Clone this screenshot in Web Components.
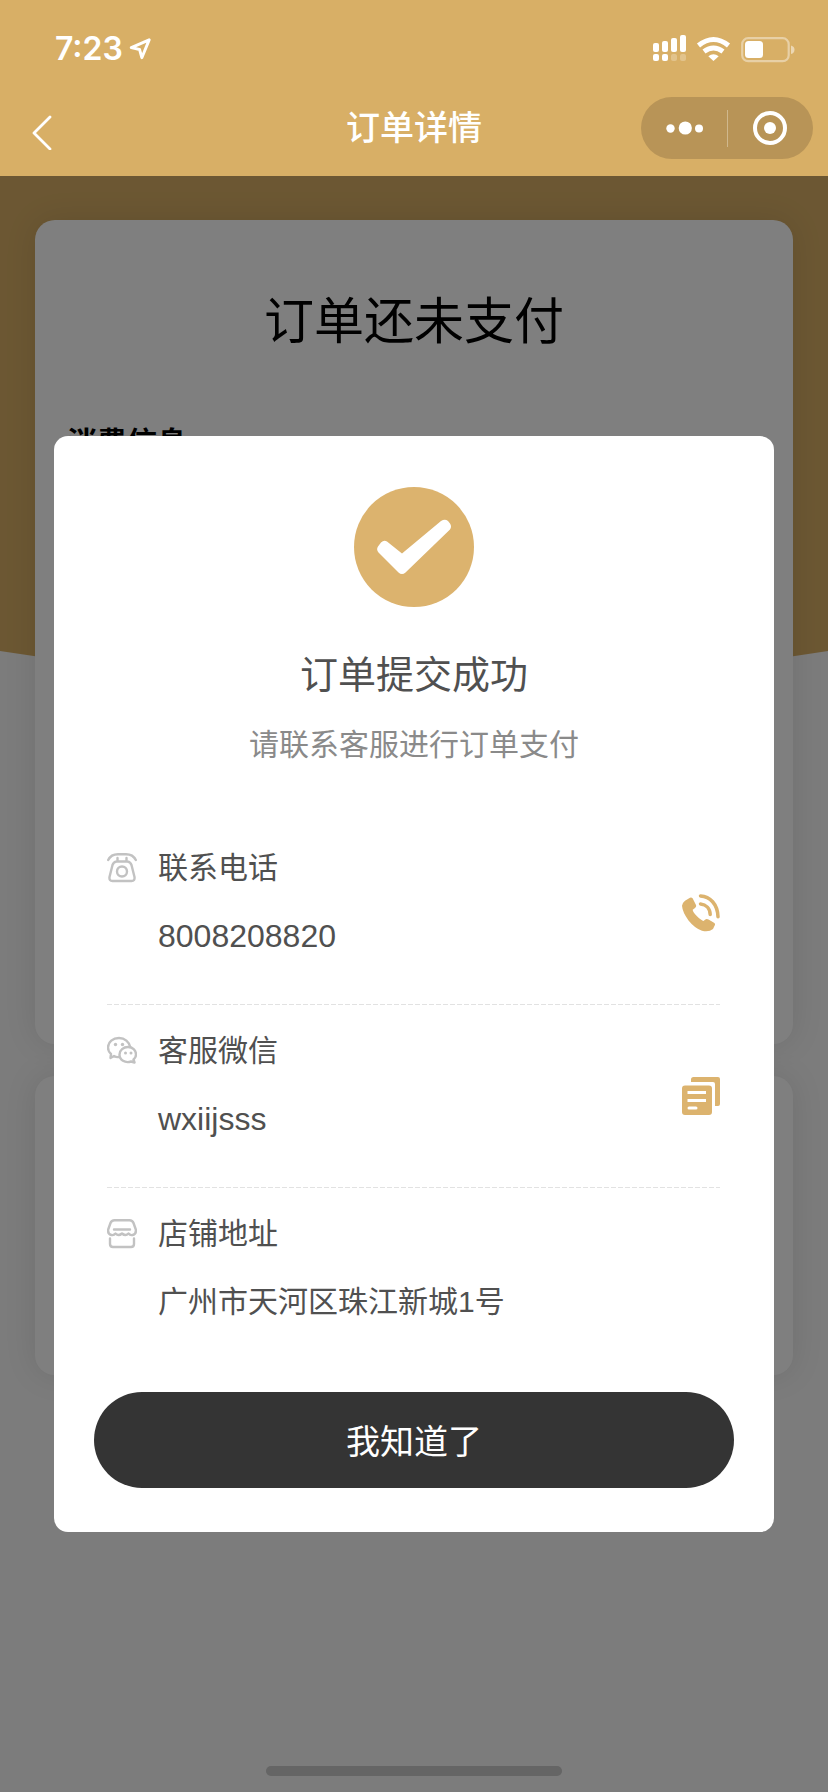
<!DOCTYPE html>
<html lang="zh-CN">
<head>
<meta charset="utf-8">
<meta name="viewport" content="width=device-width, initial-scale=1">
<title>订单详情</title>
<style>
  html, body { margin: 0; background: #f8f8f8; }
  body { font-family: "Liberation Sans", "Noto Sans CJK SC", sans-serif; color: #000; }
</style>
</head>
<body>
<order-page>
  <status-bar slot="header" time="7:23"></status-bar>
  <nav-bar slot="header">订单详情</nav-bar>
  <info-card size="large">
    <span slot="status">订单还未支付</span>
    <span slot="heading">消费信息</span>
  </info-card>
  <info-card size="small"></info-card>
  <result-dialog slot="dialog">
    <span slot="title">订单提交成功</span>
    <span slot="subtitle">请联系客服进行订单支付</span>
    <contact-row icon="telephone" action="call">联系电话<span slot="value">8008208820</span></contact-row>
    <contact-row icon="wechat" action="copy">客服微信<span slot="value">wxiijsss</span></contact-row>
    <contact-row icon="shop" cjk>店铺地址<span slot="value">广州市天河区珠江新城1号</span></contact-row>
    <span slot="confirm">我知道了</span>
  </result-dialog>
</order-page>

<script>
const define = (name, render) => customElements.define(name, class extends HTMLElement {
  constructor() {
    super();
    this.attachShadow({ mode: "open" });
  }
  connectedCallback() {
    this.shadowRoot.innerHTML = render(this);
  }
});

define("order-page", () => `
  <style>
    :host { display: flex; flex-direction: column; min-height: 100vh; position: relative; }
    header { background: #d8af66; }
    main { flex: 1; display: flex; flex-direction: column; position: relative; overflow: hidden; }
    .content { flex: 1; display: flex; flex-direction: column; gap: 32px; padding: 44px 35px 0; position: relative; }
    .curve { position: absolute; left: 0; top: 0; width: 100%; height: 496px; }
    .mask { position: absolute; inset: 0; display: flex; align-items: center; justify-content: center;
            background: rgba(0,0,0,.5); padding: 0 54px; }
    .home { position: absolute; bottom: 16px; left: 50%; width: 296px; height: 10px; margin-left: -148px;
            border-radius: 5px; background: #656565; }
  </style>
  <header><slot name="header"></slot></header>
  <main>
    <svg class="curve" viewBox="0 0 828 496" preserveAspectRatio="none" aria-hidden="true">
      <path d="M0 0H828V475Q414 540 0 475Z" fill="#d8af66"/>
    </svg>
    <div class="content"><slot></slot></div>
    <div class="mask"><slot name="dialog"></slot></div>
    <div class="home"></div>
  </main>`);

define("status-bar", el => `
  <style>
    :host { display: flex; justify-content: space-between; align-items: center; height: 96px; padding: 2px 33px 0 55px;
            box-sizing: border-box; color: #fff; font: 600 32px/40px Inter, "Liberation Sans", sans-serif; }
    .time { display: flex; align-items: center; gap: 6px; }
  </style>
  <div class="time"><span>${el.getAttribute("time")}</span>
    <svg width="22" height="22" viewBox="0 0 24 24" fill="none" stroke="#fff" stroke-width="3.200" stroke-linejoin="round" aria-hidden="true">
      <path d="M22 2L2.500 10.500L11.500 12.500L14 21.500Z"/></svg>
  </div>
  <svg width="142" height="28" viewBox="0 0 142 28" fill="#fff" aria-hidden="true">
    <rect x="0" y="8" width="6" height="9" rx="2"/><rect x="9" y="6" width="6" height="11" rx="2"/>
    <rect x="18" y="3" width="6" height="14" rx="2"/><rect x="27" y="0" width="6" height="17" rx="2"/>
    <rect x="0" y="19" width="6" height="7" rx="2"/><rect x="9" y="19" width="6" height="7" rx="2"/>
    <rect x="18" y="19" width="6" height="7" rx="2" opacity=".25"/><rect x="27" y="19" width="6" height="7" rx="2" opacity=".25"/>
    <g fill="none" stroke="#fff" stroke-width="5">
      <path d="M45.500 10.500Q60.500 -1.500 75.500 10.500"/><path d="M51 16.500Q60.500 9.500 70 16.500"/>
    </g>
    <path d="M60.500 26L55.300 21.200Q60.500 17.500 65.700 21.200Z"/>
    <rect x="89.200" y="3.200" width="46.500" height="23" rx="6" fill="none" stroke="#fff" stroke-width="2.200" opacity=".42"/>
    <rect x="92" y="6" width="18" height="17" rx="3.500"/>
    <path d="M138 10.500Q141.500 11.500 141.500 14.700Q141.500 18 138 19Z" opacity=".5"/>
  </svg>`);

define("nav-bar", () => `
  <style>
    :host { display: grid; grid-template-columns: 1fr auto 1fr; align-items: center; height: 80px; padding: 0 15px 16px;
            box-sizing: border-box; color: #fff; }
    h1 { margin: 0; padding-bottom: 4px; font: 500 34px/48px "Noto Sans CJK SC", sans-serif; }
    button { border: 0; padding: 0; background: none; color: inherit; display: flex; align-items: center; justify-content: center; }
    svg { display: block; }
    .back { width: 54px; height: 44px; padding-top: 8px; }
    .capsule { justify-self: end; display: flex; align-items: center; width: 172px; height: 62px; border-radius: 31px;
               background: #b89457; }
    .capsule button { flex: 1; height: 100%; }
    .capsule i { width: 1px; height: 37px; background: #d0b88d; }
  </style>
  <button class="back" aria-label="返回">
    <svg width="22" height="36" viewBox="0 0 22 36" fill="none" stroke="#fff" stroke-width="2.800" stroke-linecap="round" stroke-linejoin="round"><path d="M19 3L3 19L19 35"/></svg>
  </button>
  <h1><slot></slot></h1>
  <div class="capsule">
    <button aria-label="更多"><svg width="38" height="14" viewBox="0 0 38 14" fill="#fff"><circle cx="5.500" cy="7.500" r="4.200"/><circle cx="20.300" cy="7" r="6.600"/><circle cx="34" cy="7.500" r="4"/></svg></button>
    <i></i>
    <button aria-label="关闭"><svg width="34" height="34" viewBox="0 0 34 34"><circle cx="17" cy="17" r="15" fill="none" stroke="#fff" stroke-width="4"/><circle cx="17" cy="17" r="6" fill="#fff"/></svg></button>
  </div>`);

define("info-card", () => `
  <style>
    :host { display: block; box-sizing: border-box; padding: 61px 32px 0; border-radius: 20px; background: #fff;
            box-shadow: 0 0 32px rgba(0,0,0,.1); }
    :host([size="large"]) { min-height: 824px; }
    :host([size="small"]) { min-height: 299px; }
    div { font: 400 50px/72px "Noto Sans CJK SC", sans-serif; text-align: center; }
    h2 { margin: 67px 0 0; font: 700 30px/40px "Noto Sans CJK SC", sans-serif; }
  </style>
  <div><slot name="status"></slot></div>
  <h2><slot name="heading"></slot></h2>`);

define("result-dialog", () => `
  <style>
    :host { flex: 1; }
    section { display: flex; flex-direction: column; padding: 51px 40px 44px; border-radius: 14px; background: #fff; color: #505050; text-align: center; }
    svg { display: block; align-self: center; }
    h2 { margin: 41px 0 0; font: 400 38px/48px "Noto Sans CJK SC", sans-serif; }
    p { margin: 26px 0 0; font: 400 30px/40px "Noto Sans CJK SC", sans-serif; color: #8a8a8a; }
    .list { margin: 60px 14px 21px 13px; text-align: left; }
    button { height: 96px; border: 0; border-radius: 48px; background: #343434; color: #fff;
             font: 400 34px/48px "Noto Sans CJK SC", sans-serif; }
  </style>
  <section role="dialog" aria-modal="true">
    <svg width="120" height="120" viewBox="0 0 120 120" aria-hidden="true">
      <circle cx="60" cy="60" r="60" fill="#dcb36e"/>
      <path d="M33 54.500L48 66.500L87 34Q91 31.500 94 34L96 36.500Q98 39.500 96 42.500L51.500 85.500Q48 88.500 44.500 85.500L24.500 65.500Q22 62.500 24 59.500L27 55.500Q30 52.500 33 54.500Z" fill="#fff"/>
    </svg>
    <h2><slot name="title"></slot></h2>
    <p><slot name="subtitle"></slot></p>
    <div class="list"><slot></slot></div>
    <button><slot name="confirm"></slot></button>
  </section>`);

const icons = {
  telephone: `<path d="M1.200 7Q4 1.200 11 1.200H19Q26 1.200 28.800 7M10.500 5V8.500M19.500 5V8.500M9.500 8.500H20.500Q23.500 9 24.500 12L27.500 24Q28 28 24.500 28H5.500Q2 28 2.500 24L5.500 12Q6.500 9 9.500 8.500Z"/><circle cx="15" cy="18.500" r="5"/>`,
  wechat: `<path d="M12 21Q9.500 21.500 7 20L3.500 22L4 18Q1 15.500 1 11.500C1 6 6 2 12 2S22 6 23 10.500"/><path d="M26.500 23.500L27.500 26.500L24 25.500C18 27.500 12.500 24 12.500 18.500C12.500 14 16.500 11 21 11S29 14 29 18.500Q29 21.500 26.500 23.500Z"/><g fill="#c2c2c2" stroke="none"><circle cx="8.500" cy="8.500" r="1.700"/><circle cx="15.500" cy="8.500" r="1.700"/><circle cx="18.500" cy="17" r="1.500"/><circle cx="24" cy="17" r="1.500"/></g>`,
  shop: `<path d="M7.500 1.200H22.500Q25.500 1.200 26.500 4L28.800 10.500Q29.500 15 25.500 16Q23 16.500 21.500 14.500Q18.500 17.500 15 14.500Q11.500 17.500 8.500 14.500Q7 16.500 4.500 16Q.5 15 1.200 10.500L3.500 4Q4.500 1.200 7.500 1.200ZM7 10.500H23M3 19.500V25Q3 28 6 28H24Q27 28 27 25V19.500"/>`
};
const actions = {
  call: ["拨打电话", `<path d="M3 5L8 1.800Q9.500 1 10.600 2.500L14 9.500Q14.600 11.500 13 12.700L10.700 14.500Q10.500 17 15 21.500Q19.500 26 21.500 26.500L23 25.200Q24.500 24 26.500 25L32 28.500Q33.600 29.500 32.800 31.200L31 35Q27 38.800 20 37Q12.500 34 6.500 26Q.5 17.500 0 10.500Q.5 7 3 5Z" transform="translate(0 2) scale(1 .94)"/><g fill="none" stroke="#dcb36e" stroke-width="3.500" stroke-linecap="round"><path d="M18.500 1.900C28 2.500 35.500 10 36 22.700"/><path d="M18.500 10C24 10.500 28 14.500 28.200 20.500"/></g>`],
  copy: ["复制微信号", `<path d="M9 5V2.500Q9 0 11.500 0H36Q38 0 38 2V27Q38 29 36 29H33V7Q33 5 31 5Z"/><path fill-rule="evenodd" d="M3 8.500H27Q30 8.500 30 11.500V35Q30 38 27 38H3Q0 38 0 35V11.500Q0 8.500 3 8.500ZM5.500 14V17H24V14ZM5.500 22V25H24V22ZM7 29.500Q5.500 29.500 5.500 31T7 32.500H14Q15.500 32.500 15.500 31T14 29.500Z"/>`]
};

define("contact-row", el => {
  const action = actions[el.getAttribute("action")];
  return `
  <style>
    :host { display: grid; grid-template-columns: 30px 1fr auto; column-gap: 21px; align-items: center;
            padding-bottom: 1px; background: repeating-linear-gradient(90deg, #e2e2e2 0 5px, transparent 5px 7px) bottom / 100% 1px no-repeat; }
    :host(:last-of-type) { background: none; }
    .icon { align-self: start; margin-top: 31px; }
    svg { display: block; }
    dl { margin: 0; padding: 26px 0 48px; }
    dt, dd { margin: 0; line-height: 40px; }
    dt { font-size: 30px; }
    dd { margin-top: 28px; font-size: 32px; }
    :host([cjk]) dd { font-size: 30px; }
    button { border: 0; padding: 0; background: none; }
  </style>
  <svg class="icon" width="30" height="30" viewBox="0 0 30 30" fill="none" stroke="#c2c2c2" stroke-width="2.400" stroke-linecap="round" stroke-linejoin="round" aria-hidden="true">${icons[el.getAttribute("icon")]}</svg>
  <dl><dt><slot></slot></dt><dd><slot name="value"></slot></dd></dl>
  ${action ? `<button aria-label="${action[0]}"><svg width="38" height="38" viewBox="0 0 38 38" fill="#dcb36e">${action[1]}</svg></button>` : ""}`;
});
</script>
</body>
</html>
